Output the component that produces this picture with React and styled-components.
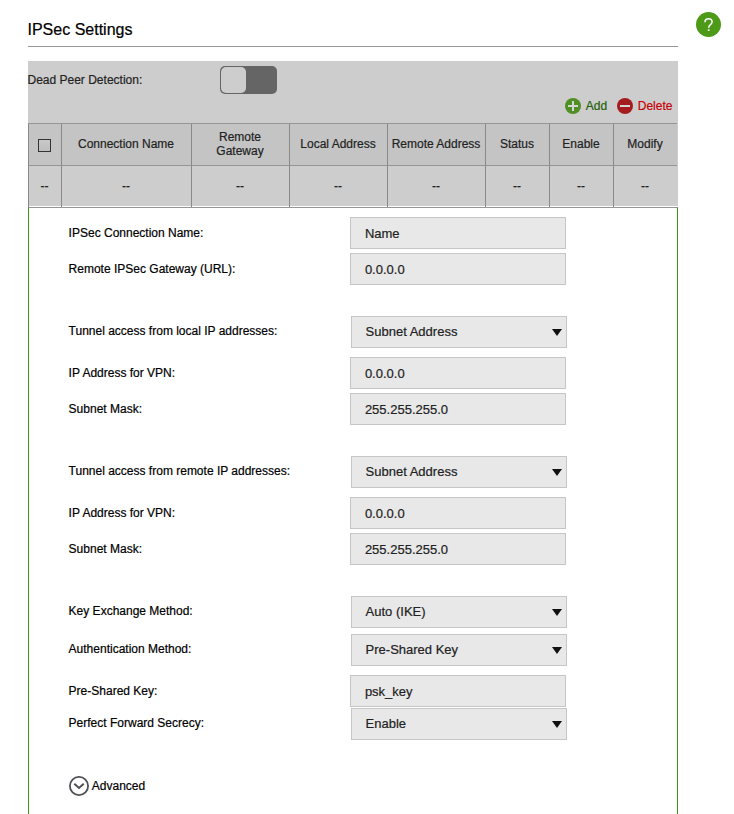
import React from 'react';
import styled, { createGlobalStyle } from 'styled-components';

const GlobalStyle = createGlobalStyle`
  * { box-sizing: border-box; }
  html, body { margin: 0; padding: 0; background: #fff; }
  body {
    font-family: "Liberation Sans", Arial, sans-serif;
    font-size: 12px;
    color: #000;
    -webkit-text-stroke: 0.2px currentColor;
  }
`;

const Page = styled.div`
  display: flex;
  align-items: flex-start;
  width: 734px;
  height: 814px;
  padding-left: 28px;
`;

const Main = styled.main`
  display: flex;
  flex-direction: column;
  width: 650px;
  height: 814px;
`;

const Title = styled.h1`
  margin: 0 0 14px;
  height: 47px;
  padding-top: 21px;
  border-bottom: 1px solid #979797;
  font-size: 16px;
  font-weight: 400;
  line-height: 18px;
  text-indent: -0.5px;
`;

const HelpButton = styled.button`
  display: flex;
  align-items: center;
  justify-content: center;
  margin: 12px 0 0 18px;
  padding: 0;
  width: 25px;
  height: 25px;
  border: 0;
  background: none;
`;

const Overview = styled.section`
  height: 146px;
  background: linear-gradient(#cdcdcd, #cdcdcd) 0 0 / 100% 145px no-repeat;
  color: #222;
`;

const DetectionRow = styled.div`
  display: flex;
  align-items: center;
  height: 33px;
  padding-top: 5px;
`;

const DetectionLabel = styled.span`
  width: 192px;
  text-indent: -0.5px;
  line-height: 14px;
`;

const Toggle = styled.div`
  width: 57px;
  height: 28px;
  padding: 1px;
  border-radius: 5px;
  background: #656565;
`;

const Knob = styled.div`
  width: 25px;
  height: 26px;
  border-radius: 5px;
  background: #cdcdcd;
`;

const Actions = styled.div`
  display: flex;
  justify-content: flex-end;
  height: 29px;
  padding: 4px 5.6px 0 0;
`;

const Action = styled.div`
  display: flex;
  height: 16px;
  gap: 5px;
  margin-left: 9.5px;
  line-height: 16px;
  color: ${(p) => p.$color};
`;

const Table = styled.div`
  display: grid;
  grid-template-columns: 33px 130px 98px 98px 98px 64px 64px 64px;
  width: 649px;
  border-top: 1px solid #959595;
`;

const Cell = styled.div`
  display: flex;
  align-items: center;
  justify-content: center;
  height: 42px;
  padding: 0 1px ${(p) => (p.$head ? 2 : 3)}px 0;
  border-left: 1px solid #898989;
  border-bottom: ${(p) => (p.$head ? '1px solid #959595' : '0')};
  background: ${(p) => (p.$head ? '#c4c4c4' : 'transparent')};
  line-height: 14px;
  text-align: center;
  white-space: pre;
`;

const Checkbox = styled.span`
  width: 13px;
  height: 13px;
  margin-top: 3px;
  border: 1px solid #333;
  background: linear-gradient(#c8c8c8, #bebebe);
`;

const Form = styled.form`
  flex: 1;
  width: 650px;
  padding: 9px 0 0 40px;
  border-top: 1px solid #959595;
  border-left: 1px solid #3f9412;
  border-right: 1px solid #3f9412;
`;

const Row = styled.div`
  display: flex;
  height: 32px;
  margin-top: ${(p) => p.$gap}px;
`;

const Label = styled.label`
  width: ${(p) => (p.$select ? 282 : 281)}px;
  padding-top: ${(p) => (p.$select ? 8 : 9)}px;
  line-height: 14px;
  text-indent: -0.4px;
`;

const Field = styled.div`
  display: flex;
  align-items: center;
  justify-content: space-between;
  width: 216px;
  height: 32px;
  padding: ${(p) => (p.$select ? '0 4px 2px 13.6px' : '0 4px 0 13.9px')};
  border: 1px solid #c6c6c6;
  background: #e8e8e8;
  color: #222;
  font-size: 13px;
  line-height: 15px;
`;

const Arrow = styled.svg`
  margin-top: 2px;
`;

const Advanced = styled.div`
  display: flex;
  align-items: center;
  gap: 2.8px;
  height: 20px;
  margin-top: 36px;
`;

const columns = [
  'Connection Name', 'Remote\nGateway', 'Local Address', 'Remote Address',
  'Status', 'Enable', 'Modify',
];

const fields = [
  { label: 'IPSec Connection Name:', value: 'Name', gap: 0 },
  { label: 'Remote IPSec Gateway (URL):', value: '0.0.0.0', gap: 4 },
  { label: 'Tunnel access from local IP addresses:', value: 'Subnet Address', gap: 31, select: true },
  { label: 'IP Address for VPN:', value: '0.0.0.0', gap: 9 },
  { label: 'Subnet Mask:', value: '255.255.255.0', gap: 4 },
  { label: 'Tunnel access from remote IP addresses:', value: 'Subnet Address', gap: 31, select: true },
  { label: 'IP Address for VPN:', value: '0.0.0.0', gap: 9 },
  { label: 'Subnet Mask:', value: '255.255.255.0', gap: 4 },
  { label: 'Key Exchange Method:', value: 'Auto (IKE)', gap: 31, select: true },
  { label: 'Authentication Method:', value: 'Pre-Shared Key', gap: 6, select: true },
  { label: 'Pre-Shared Key:', value: 'psk_key', gap: 9 },
  { label: 'Perfect Forward Secrecy:', value: 'Enable', gap: 1, select: true },
];

export default function App() {
  return (
    <>
      <GlobalStyle />
      <Page>
        <Main>
          <Title>IPSec Settings</Title>
          <Overview>
            <DetectionRow>
              <DetectionLabel>Dead Peer Detection:</DetectionLabel>
              <Toggle><Knob /></Toggle>
            </DetectionRow>
            <Actions>
              <Action $color="#245f0c">
                <svg width="16" height="16" viewBox="0 0 16 16">
                  <circle cx="8" cy="8" r="8" fill="#4f8f24" />
                  <path d="M8 3v10M3 8h10" stroke="#d6d6d6" strokeWidth="2" />
                </svg>
                Add
              </Action>
              <Action $color="#c60008">
                <svg width="16" height="16" viewBox="0 0 16 16">
                  <circle cx="8" cy="8" r="8" fill="#a51c1f" />
                  <path d="M3 8h10" stroke="#d6d6d6" strokeWidth="2" />
                </svg>
                Delete
              </Action>
            </Actions>
            <Table>
              <Cell $head><Checkbox /></Cell>
              {columns.map((c) => <Cell $head key={c}>{c}</Cell>)}
              <Cell>--</Cell>
              {columns.map((c) => <Cell key={c}>--</Cell>)}
            </Table>
          </Overview>
          <Form>
            {fields.map((f, i) => (
              <Row key={i} $gap={f.gap}>
                <Label $select={f.select}>{f.label}</Label>
                <Field $select={f.select}>
                  {f.value}
                  {f.select && (
                    <Arrow width="10" height="7" viewBox="0 0 10 7">
                      <path d="M0 0h10L5 7z" fill="#111" />
                    </Arrow>
                  )}
                </Field>
              </Row>
            ))}
            <Advanced>
              <svg width="20" height="20" viewBox="0 0 20 20" fill="none" stroke="#505054">
                <circle cx="10" cy="10" r="9.1" strokeWidth="1.8" />
                <path d="M5.3 7.8L10 12l4.7-4.2" strokeWidth="2" />
              </svg>
              Advanced
            </Advanced>
          </Form>
        </Main>
        <HelpButton aria-label="Help">
          <svg width="25" height="25" viewBox="0 0 25 25" fill="none">
            <circle cx="12.5" cy="12.5" r="12.5" fill="#4c9a17" />
            <path d="M9 10.2C9 8 10.3 6.8 12.5 6.8s3.6 1.3 3.6 3.2c0 2.6-3.4 2.8-3.4 5.8" stroke="#fff" strokeWidth="1.5" />
            <path d="M11.8 17.3h1.7v1.7h-1.7z" fill="#fff" />
          </svg>
        </HelpButton>
      </Page>
    </>
  );
}
